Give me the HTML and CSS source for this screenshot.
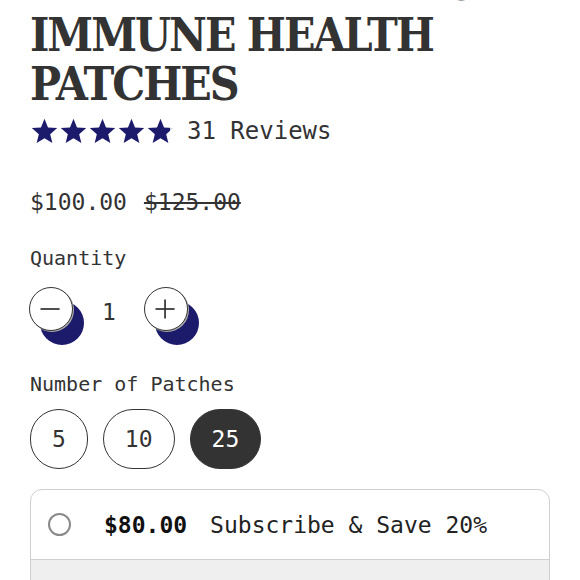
FILE: index.html
```html
<!DOCTYPE html>
<html>
<head>
<meta charset="utf-8">
<link rel="stylesheet" href="styles.css">
</head>
<body>
<main class="product">
  <h1 class="title"><span class="title-top">Vitamin D3 Boosting</span><span class="title-main">IMMUNE HEALTH<br>PATCHES</span></h1>
  <div class="rating">
    <div class="stars">
      <svg class="star" viewBox="0 0 24 24"><path d="M12 1.5l2.9 7.1 7.6.6-5.8 5 1.8 7.4L12 17.6l-6.5 4 1.8-7.4-5.8-5 7.6-.6z"/></svg>
      <svg class="star" viewBox="0 0 24 24"><path d="M12 1.5l2.9 7.1 7.6.6-5.8 5 1.8 7.4L12 17.6l-6.5 4 1.8-7.4-5.8-5 7.6-.6z"/></svg>
      <svg class="star" viewBox="0 0 24 24"><path d="M12 1.5l2.9 7.1 7.6.6-5.8 5 1.8 7.4L12 17.6l-6.5 4 1.8-7.4-5.8-5 7.6-.6z"/></svg>
      <svg class="star" viewBox="0 0 24 24"><path d="M12 1.5l2.9 7.1 7.6.6-5.8 5 1.8 7.4L12 17.6l-6.5 4 1.8-7.4-5.8-5 7.6-.6z"/></svg>
      <svg class="star" viewBox="0 0 24 24"><defs><linearGradient id="part"><stop offset="88%" stop-color="#1c1a6b"/><stop offset="88%" stop-color="#d6d6de"/></linearGradient></defs><path fill="url(#part)" d="M12 1.5l2.9 7.1 7.6.6-5.8 5 1.8 7.4L12 17.6l-6.5 4 1.8-7.4-5.8-5 7.6-.6z"/></svg>
    </div>
    <span class="reviews">31 Reviews</span>
  </div>
  <div class="price">
    <span class="now">$100.00</span>
    <s class="was">$125.00</s>
  </div>
  <div class="label">Quantity</div>
  <div class="qty">
    <button class="qbtn" aria-label="Decrease">
      <svg viewBox="0 0 44 44"><line x1="11" y1="22" x2="31" y2="22"/></svg>
    </button>
    <span class="qval">1</span>
    <button class="qbtn" aria-label="Increase">
      <svg viewBox="0 0 44 44"><line x1="11" y1="22" x2="31" y2="22"/><line x1="21" y1="12" x2="21" y2="32"/></svg>
    </button>
  </div>
  <div class="label label-patches">Number of Patches</div>
  <div class="pills">
    <button class="pill">5</button>
    <button class="pill">10</button>
    <button class="pill active">25</button>
  </div>
  <div class="card">
    <div class="option">
      <span class="radio"></span>
      <span class="opt-price">$80.00</span>
      <span class="opt-text">Subscribe &amp; Save 20%</span>
    </div>
    <div class="option-alt"></div>
  </div>
</main>
</body>
</html>
```

FILE: styles.css
```css
* { box-sizing: border-box; }
html, body { margin: 0; padding: 0; background: #fff; overflow: hidden; }
body {
  font-family: "DejaVu Sans Mono", "Liberation Mono", monospace;
  color: #333;
  width: 580px;
  height: 580px;
}
.product {
  padding: 0 30px;
  display: flex;
  flex-direction: column;
}
.title {
  margin: 0;
  font-family: "DejaVu Serif Condensed", "DejaVu Serif", serif;
  font-weight: bold;
  font-size: 46px;
  letter-spacing: -2px;
  color: #333;
}
.title-top {
  display: block;
  line-height: 49px;
  margin-top: -50px;
  white-space: nowrap;
}
.title-main {
  display: block;
  line-height: 49px;
  margin-top: 12px;
}
.rating {
  display: flex;
  align-items: center;
  margin-top: 7px;
  height: 30px;
}
.stars { display: flex; }
.star { width: 29px; height: 29px; fill: #1c1a6b; }
.reviews { font-size: 24px; margin-left: 12px; color: #333; }
.price {
  display: flex;
  gap: 17px;
  margin-top: 41px;
  font-size: 23px;
  line-height: 30px;
}
.was { text-decoration-thickness: 2px; }
.label {
  margin-top: 29px;
  font-size: 20px;
  line-height: 24px;
}
.qty {
  display: flex;
  align-items: center;
  margin-top: 17px;
  height: 44px;
}
.qbtn {
  width: 44px;
  height: 44px;
  padding: 0;
  border: 1.5px solid #333;
  border-radius: 50%;
  background: #fff;
  box-shadow: 1px 1px 0 0 #aaa, 11px 14px 0 0 #1c1a6b;
  margin-left: -1px;
}
.qbtn svg { display: block; width: 100%; height: 100%; }
.qbtn line { stroke: #333; stroke-width: 1.8; }
.qval { width: 72px; text-align: center; font-size: 23px; margin-top: 6px; }
.label-patches { margin-top: 41px; }
.pills {
  display: flex;
  gap: 15px;
  margin-top: 13px;
}
.pill {
  height: 60px;
  padding: 0 21px;
  border: 1.5px solid #333;
  border-radius: 30px;
  background: #fff;
  font-family: inherit;
  font-size: 23px;
  color: #333;
}
.pill.active { background: #333; border-color: #333; color: #fff; }
.card {
  margin-top: 20px;
  border: 1.5px solid #cfcfcf;
  border-radius: 12px;
  overflow: hidden;
}
.option {
  display: flex;
  align-items: center;
  height: 70px;
  padding-left: 17px;
  border-bottom: 1.5px solid #d0d0d0;
}
.radio {
  width: 23px;
  height: 23px;
  border: 2px solid #8a8a8a;
  border-radius: 50%;
  margin-right: 33px;
}
.opt-price { font-weight: bold; font-size: 23px; color: #111; }
.opt-text { font-size: 23px; margin-left: 23px; color: #222; }
.option-alt { height: 40px; background: #efefef; }
```
